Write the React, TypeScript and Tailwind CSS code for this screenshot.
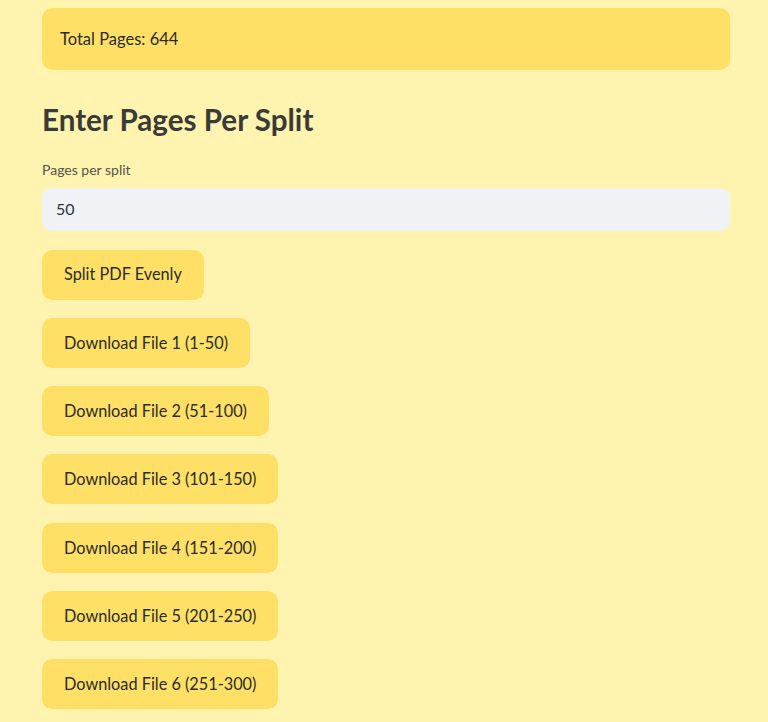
const files = [
  "Download File 1 (1-50)",
  "Download File 2 (51-100)",
  "Download File 3 (101-150)",
  "Download File 4 (151-200)",
  "Download File 5 (201-250)",
  "Download File 6 (251-300)",
];

function Btn({ label }: { label: string }) {
  return (
    <button className="h-[50px] self-start rounded-[10px] bg-[#ffe066] px-[22px] text-[16.3px] text-[#2b2b2b]">
      {label}
    </button>
  );
}

export default function App() {
  return (
    <div className="min-h-screen bg-[#fff3b0] pl-[42px] pr-[38px] pt-2 pb-4 font-['Lato',sans-serif] text-[#31333f]">
      <div className="flex h-[62px] items-center rounded-[10px] bg-[#ffe066] px-[18px] text-[16.5px] text-[#2b2b2b]">
        Total Pages: 644
      </div>
      <h3 className="mt-[35px] text-[29.6px] font-bold leading-none text-[#3a3a36]">Enter Pages Per Split</h3>
      <div className="mt-[25px] text-[14px] leading-[20px] text-[#55554a]">Pages per split</div>
      <div className="mt-[8px] flex h-[43px] items-center rounded-[10px] bg-[#f0f2f6] px-[14px] text-[16px]">
        50
      </div>
      <div className="mt-[19px] flex flex-col gap-[18.3px]">
        <Btn label="Split PDF Evenly" />
        {files.map((f) => (
          <Btn key={f} label={f} />
        ))}
      </div>
    </div>
  );
}
